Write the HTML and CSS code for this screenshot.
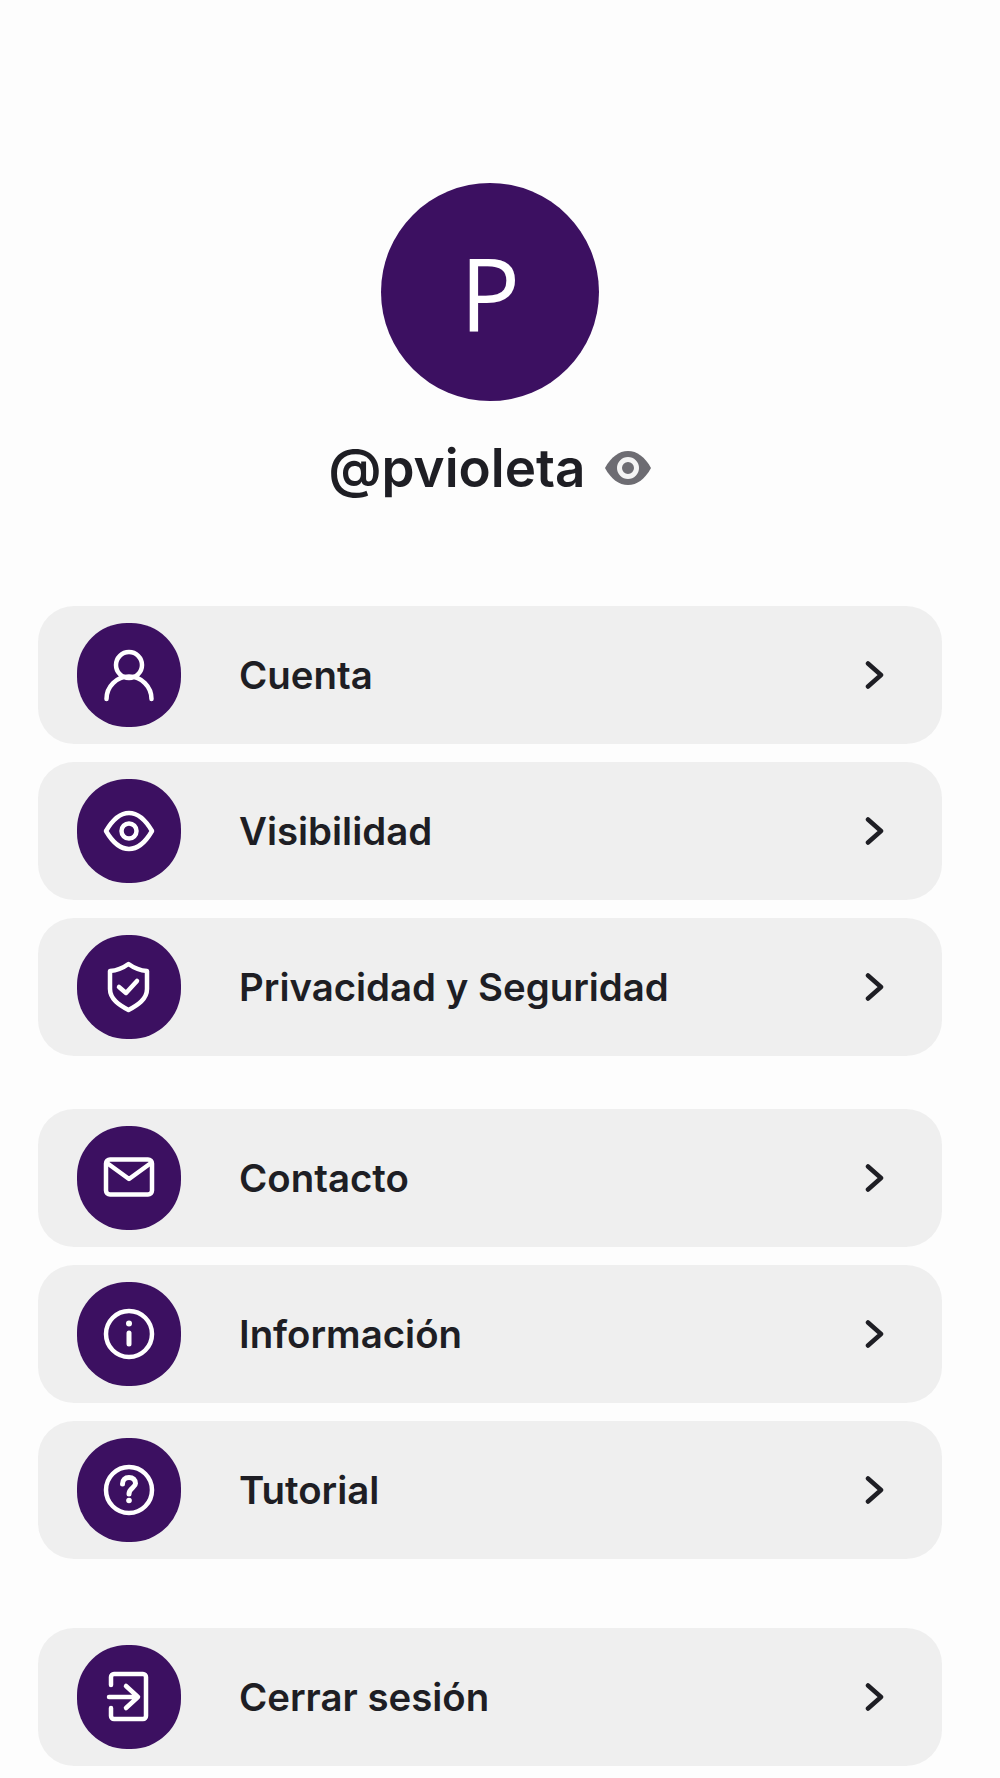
FILE: index.html
```html
<!DOCTYPE html>
<html lang="es">
<head>
    <meta charset="UTF-8">
    <meta name="viewport" content="width=device-width, initial-scale=1.0">
    <title>Perfil</title>
    <link rel="stylesheet" href="styles.css">
</head>
<body>

<!-- Cabecera del perfil -->
<header class="profile">
    <div class="avatar">P</div>
    <div class="username">
        <span>@pvioleta</span>
        <svg class="username-eye" viewBox="0 0 46 34" width="46" height="34">
            <path class="eye-fill" d="M0 17C6 6 14 0 23 0C32 0 40 6 46 17C40 28 32 34 23 34C14 34 6 28 0 17Z"/>
            <circle class="eye-ring" cx="23" cy="17" r="8.5"/>
        </svg>
    </div>
</header>

<!-- Cuenta -->
<section class="group">
    <div class="row">
        <div class="row-icon">
            <svg viewBox="0 0 104 104" width="104" height="104">
                <circle cx="52" cy="42" r="13"/>
                <path d="M29.5 76A22.5 22.5 0 0 1 74.5 76"/>
            </svg>
        </div>
        <span class="row-label">Cuenta</span>
        <svg class="chevron" viewBox="0 0 20 32" width="20" height="32"><path d="M4 4.5L17 16L4 27.5"/></svg>
    </div>
    <div class="row">
        <div class="row-icon">
            <svg viewBox="0 0 104 104" width="104" height="104">
                <path d="M29 52C36 40 43 34 52 34C61 34 68 40 75 52C68 64 61 70 52 70C43 70 36 64 29 52Z"/>
                <circle cx="52" cy="52" r="7.5"/>
            </svg>
        </div>
        <span class="row-label">Visibilidad</span>
        <svg class="chevron" viewBox="0 0 20 32" width="20" height="32"><path d="M4 4.5L17 16L4 27.5"/></svg>
    </div>
    <div class="row">
        <div class="row-icon">
            <svg viewBox="0 0 104 104" width="104" height="104">
                <path d="M51.5 29C46 33 40 35.5 33 36V54C33 64 42 70 51.5 75C61 70 70 64 70 54V36C63 35.5 57 33 51.5 29Z"/>
                <path d="M42 52L49 58L60 46"/>
            </svg>
        </div>
        <span class="row-label">Privacidad y Seguridad</span>
        <svg class="chevron" viewBox="0 0 20 32" width="20" height="32"><path d="M4 4.5L17 16L4 27.5"/></svg>
    </div>
</section>

<!-- Ayuda -->
<section class="group">
    <div class="row">
        <div class="row-icon">
            <svg viewBox="0 0 104 104" width="104" height="104">
                <rect x="29" y="33.5" width="46" height="35" rx="4"/>
                <path d="M30 37L52 53L74 37"/>
            </svg>
        </div>
        <span class="row-label">Contacto</span>
        <svg class="chevron" viewBox="0 0 20 32" width="20" height="32"><path d="M4 4.5L17 16L4 27.5"/></svg>
    </div>
    <div class="row">
        <div class="row-icon">
            <svg viewBox="0 0 104 104" width="104" height="104">
                <circle cx="52" cy="52" r="23"/>
                <path class="thick" d="M52 51V62"/>
                <circle class="dot" cx="52" cy="41.5" r="3"/>
            </svg>
        </div>
        <span class="row-label">Información</span>
        <svg class="chevron" viewBox="0 0 20 32" width="20" height="32"><path d="M4 4.5L17 16L4 27.5"/></svg>
    </div>
    <div class="row">
        <div class="row-icon">
            <svg viewBox="0 0 104 104" width="104" height="104">
                <circle cx="52" cy="52" r="23"/>
                <path class="thick" d="M45.5 46C45.5 42 48 39.5 52 39.5C56 39.5 58.5 42 58.5 45.5C58.5 49.5 52 50 52 56"/>
                <circle class="dot" cx="52" cy="62.5" r="2.8"/>
            </svg>
        </div>
        <span class="row-label">Tutorial</span>
        <svg class="chevron" viewBox="0 0 20 32" width="20" height="32"><path d="M4 4.5L17 16L4 27.5"/></svg>
    </div>
</section>

<!-- Salir -->
<section class="group group-last">
    <div class="row">
        <div class="row-icon">
            <svg viewBox="0 0 104 104" width="104" height="104">
                <path d="M34 40V32A3 3 0 0 1 37 29H66A3 3 0 0 1 69 32V71A3 3 0 0 1 66 74H37A3 3 0 0 1 34 71V63"/>
                <path d="M32 52H60M49 41L61 52L49 63"/>
            </svg>
        </div>
        <span class="row-label">Cerrar sesión</span>
        <svg class="chevron" viewBox="0 0 20 32" width="20" height="32"><path d="M4 4.5L17 16L4 27.5"/></svg>
    </div>
</section>

</body>
</html>
```

FILE: styles.css
```css
body {
    font-family: "Inter", "Liberation Sans", sans-serif;
    background-color: #fdfdfd;
    color: #1e1e24;
    margin: 0;
    padding: 183px 58px 0 38px;
}

.profile {
    display: flex;
    flex-direction: column;
    align-items: center;
    margin-bottom: 105px;
}

.avatar {
    width: 218px;
    height: 218px;
    border-radius: 50%;
    background-color: #3c1061;
    color: #fff;
    font-family: "Open Sans", sans-serif;
    font-size: 100px;
    font-weight: 400;
    line-height: 142px;
    display: flex;
    align-items: center;
    justify-content: center;
}

.username {
    display: flex;
    align-items: center;
    gap: 20px;
    margin-top: 34px;
    font-size: 53px;
    font-weight: 600;
    line-height: 66px;
}

.eye-fill {
    fill: #6d6c72;
}

.eye-ring {
    fill: none;
    stroke: #f4f4f4;
    stroke-width: 5;
}

.group {
    display: flex;
    flex-direction: column;
    gap: 18px;
    margin-bottom: 53px;
}

.group-last {
    margin-top: 69px;
}

.row {
    height: 138px;
    background-color: #efefef;
    border-radius: 36px;
    display: flex;
    align-items: center;
    padding: 0 58px 0 39px;
}

.row-icon {
    width: 104px;
    height: 104px;
    border-radius: 50px;
    background-color: #3c1061;
    flex-shrink: 0;
}

.row-icon svg {
    display: block;
    fill: none;
    stroke: #fff;
    stroke-width: 4.5;
    stroke-linecap: round;
    stroke-linejoin: round;
}

.row-icon .thick {
    stroke-width: 5;
}

.row-icon .dot {
    fill: #fff;
    stroke: none;
}

.row-label {
    flex: 1;
    margin-left: 58px;
    font-size: 38.4px;
    font-weight: 600;
}

.chevron {
    fill: none;
    stroke: #1e1e24;
    stroke-width: 4.5;
    stroke-linecap: round;
    stroke-linejoin: round;
}
```
